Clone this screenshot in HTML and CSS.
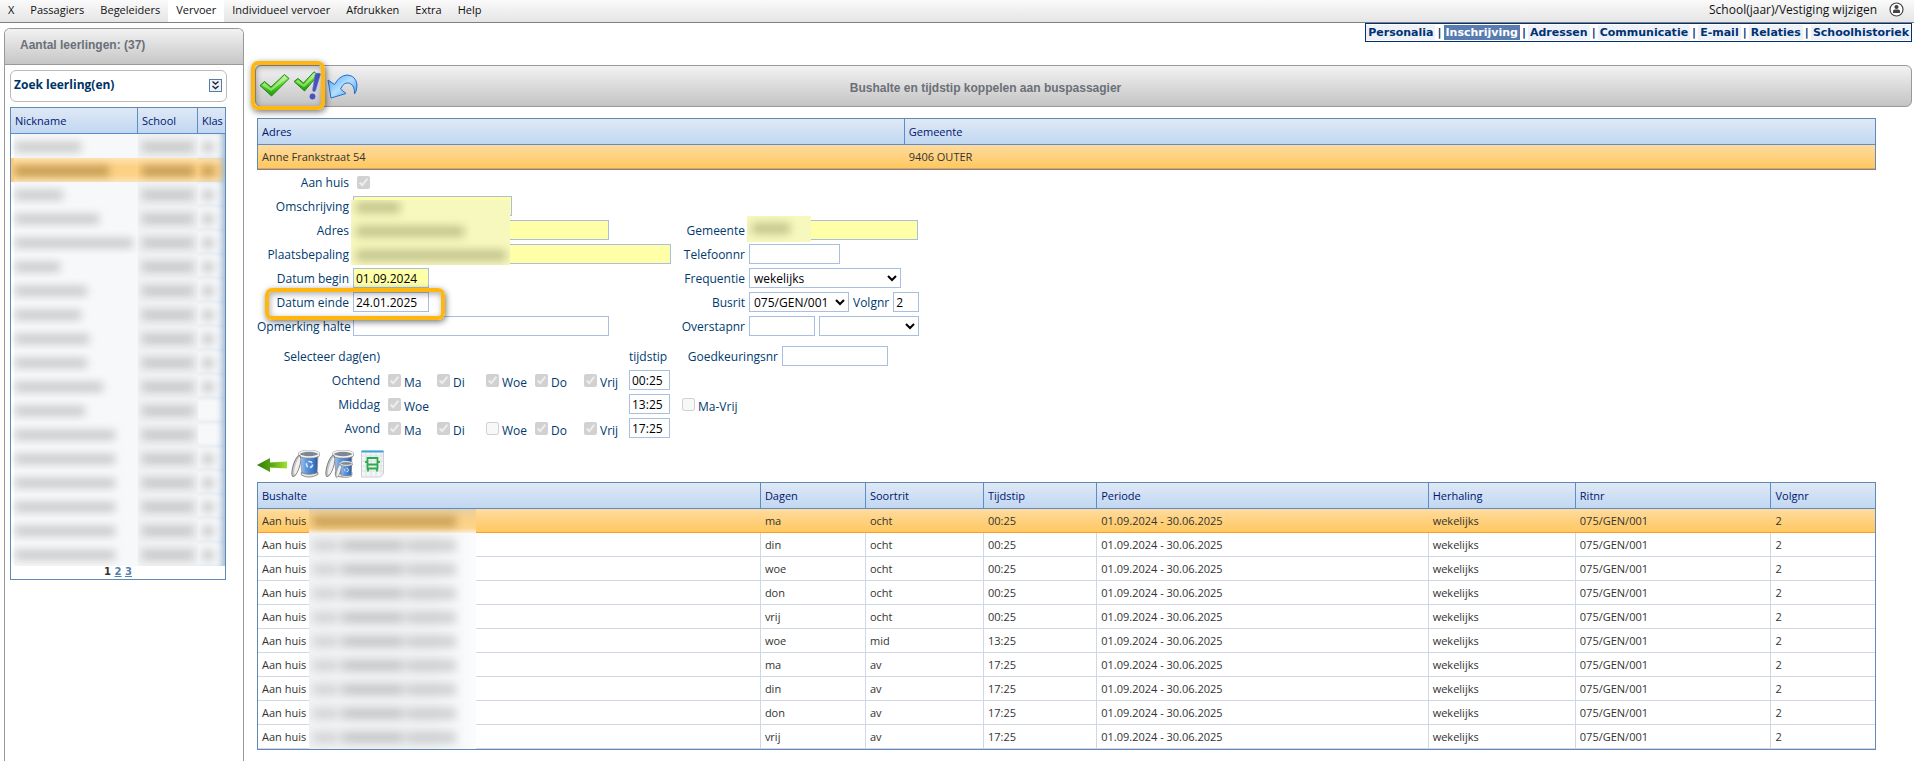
FILE: index.html
```html
<!DOCTYPE html>
<html lang="nl">
<head>
<meta charset="utf-8">
<title>Bushalte en tijdstip koppelen aan buspassagier</title>
<link rel="stylesheet" href="styles.css">
</head>
<body>
<nav class="menu">
  <a href="#">X</a><a href="#">Passagiers</a><a href="#">Begeleiders</a><a href="#" class="active">Vervoer</a><a href="#">Individueel vervoer</a><a href="#">Afdrukken</a><a href="#">Extra</a><a href="#">Help</a>
  <a href="#" class="right">School(jaar)/Vestiging wijzigen</a>
  <button class="user" aria-label="Gebruiker"><svg width="15" height="15" viewBox="0 0 15 15"><circle cx="7.500" cy="7.500" r="6.500" fill="#fff" stroke="#444" stroke-width="1.200"/><circle cx="7.500" cy="5" r="2.100" fill="#444"/><path d="M4 11V9.300Q4 7.600 5.700 7.600H9.300Q11 7.600 11 9.300V11Z" fill="#444"/></svg></button>
</nav>
<div class="layout">
  <aside class="side">
    <h2 class="side-title">Aantal leerlingen: (37)</h2>
    <div class="side-body">
      <div class="search"><span>Zoek leerling(en)</span>
        <button aria-label="Uitklappen"><svg width="13" height="13" viewBox="0 0 13 13"><rect x=".5" y=".5" width="12" height="12" fill="#eaf2fb" stroke="#5c7c9c"/><path d="M3.500 2.500 6.500 5 9.500 2.500M3.500 7 6.500 9.500 9.500 7" fill="none" stroke="#223" stroke-width="1.400"/></svg></button>
      </div>
      <div class="pupils">
        <table class="grid">
          <colgroup><col class="c-nick"><col class="c-school"><col class="c-klas"></colgroup>
          <thead><tr><th>Nickname</th><th>School</th><th>Klas</th></tr></thead>
          <tbody>
            <tr><td><i style="width:66px"></i></td><td><i></i></td><td><i></i></td></tr>
            <tr class="sel"><td><i style="width:94px"></i></td><td><i></i></td><td><i></i></td></tr>
            <tr><td><i style="width:48px"></i></td><td><i></i></td><td><i></i></td></tr>
            <tr><td><i style="width:84px"></i></td><td><i></i></td><td><i></i></td></tr>
            <tr><td><i style="width:118px"></i></td><td><i></i></td><td><i></i></td></tr>
            <tr><td><i style="width:45px"></i></td><td><i></i></td><td><i></i></td></tr>
            <tr><td><i style="width:72px"></i></td><td><i></i></td><td><i></i></td></tr>
            <tr><td><i style="width:66px"></i></td><td><i></i></td><td><i></i></td></tr>
            <tr><td><i style="width:74px"></i></td><td><i></i></td><td><i></i></td></tr>
            <tr><td><i style="width:72px"></i></td><td><i></i></td><td><i></i></td></tr>
            <tr><td><i style="width:88px"></i></td><td><i></i></td><td><i></i></td></tr>
            <tr><td><i style="width:70px"></i></td><td><i></i></td><td></td></tr>
            <tr><td><i style="width:100px"></i></td><td><i></i></td><td></td></tr>
            <tr><td><i style="width:100px"></i></td><td><i></i></td><td><i></i></td></tr>
            <tr><td><i style="width:100px"></i></td><td><i></i></td><td><i></i></td></tr>
            <tr><td><i style="width:100px"></i></td><td><i></i></td><td><i></i></td></tr>
            <tr><td><i style="width:100px"></i></td><td><i></i></td><td><i></i></td></tr>
            <tr><td><i style="width:100px"></i></td><td><i></i></td><td><i></i></td></tr>
          </tbody>
        </table>
        <div class="pager"><b>1</b> <a href="#">2</a> <a href="#">3</a></div>
      </div>
    </div>
  </aside>
  <main class="main">
    <nav class="tabs"><a href="#">Personalia</a>|<a href="#" class="on">Inschrijving</a>|<a href="#">Adressen</a>|<a href="#">Communicatie</a>|<a href="#">E-mail</a>|<a href="#">Relaties</a>|<a href="#">Schoolhistoriek</a></nav>
    <header class="toolbar">
      <svg width="0" height="0" class="defs" aria-hidden="true"><defs>
        <linearGradient id="gr" x1="0" y1="0" x2="0" y2="1"><stop offset="0" stop-color="#b5f28e"/><stop offset=".5" stop-color="#4fd024"/><stop offset="1" stop-color="#1f9a08"/></linearGradient>
        <linearGradient id="bl" x1="0" y1="0" x2="1" y2="1"><stop offset="0" stop-color="#4aa5f5"/><stop offset=".5" stop-color="#b4e0ff"/><stop offset="1" stop-color="#3b8eea"/></linearGradient>
        <linearGradient id="bin" x1="0" y1="0" x2="1" y2="0"><stop offset="0" stop-color="#a9c8ee"/><stop offset=".35" stop-color="#5f98dc"/><stop offset=".75" stop-color="#3f78c4"/><stop offset="1" stop-color="#2c55a0"/></linearGradient>
        <linearGradient id="ar" x1="0" y1="0" x2="1" y2="0"><stop offset="0" stop-color="#2f7a08"/><stop offset=".5" stop-color="#5aa814"/><stop offset="1" stop-color="#a4e034"/></linearGradient>
        <g id="can">
          <path d="M9 4.500 11 24Q18 27 26 24L27 4.500Z" fill="url(#bin)" stroke="#8a8f98" stroke-width=".8"/>
          <path d="M10.300 22.500Q18 26 27 22.500V24.500Q18 29.500 10.300 25Z" fill="#e6e6e6" stroke="#777" stroke-width=".8"/>
          <ellipse cx="18" cy="4.300" rx="9.800" ry="3" fill="#7b8796" stroke="#8a8a8a" stroke-width="2.600"/>
          <ellipse cx="18" cy="4" rx="9.800" ry="3" fill="none" stroke="#f2f2f2" stroke-width="1.600"/>
          <ellipse cx="5.300" cy="16" rx="3.200" ry="11" transform="rotate(17 5.300 16)" fill="#c4c4c4" stroke="#808080"/>
          <ellipse cx="6.200" cy="16" rx="1.900" ry="9" transform="rotate(17 6.200 16)" fill="#f0f0f0"/>
          <circle cx="18.500" cy="14.500" r="3" fill="none" stroke="#d6ecff" stroke-width="1.600" stroke-dasharray="4.200 2.083"/>
        </g>
      </defs></svg>
      <div class="tools">
        <button aria-label="Bewaren"><svg width="31" height="30" viewBox="0 0 31 30"><path d="M1 14.500 5.500 10.500 12 16 25.500 3.500 30 7.500 12.500 25Z" fill="url(#gr)" stroke="#27821a"/><path d="M3 14.300 5.600 12 12 17.500 25.500 5 28 7.400 12.300 20Z" fill="#d8ffc0" opacity=".5"/></svg></button>
        <button aria-label="Bewaren en controleren"><svg width="31" height="30" viewBox="0 0 31 30"><path d="M1 10.500 5 7.500 10.500 12 21 .8 25 4 11.500 20Z" fill="url(#gr)" stroke="#27821a"/><path d="M3 10.500 5 9 10.500 13.800 21 2.500 23 4.200 11 16Z" fill="#d8ffc0" opacity=".5"/><path d="M22 3.500Q25 1 27.500 3L22.500 20Q20.500 21.500 19.500 19.500Z" fill="#4653c0" stroke="#6d78d0" stroke-width=".6"/><circle cx="19.500" cy="25.500" r="2.900" fill="#4653c0"/></svg></button>
        <button aria-label="Ongedaan maken"><svg width="31" height="30" viewBox="0 0 31 30"><path d="M1 9 7.500 13.500Q12.500 4.500 20 4Q29 4.500 30 14Q30 20 27.500 23Q28 14.500 22.500 12.200Q17 10.500 13.500 18L19 22.500 4 27Z" fill="url(#bl)" stroke="#2470cc"/></svg></button>
        <span class="mark mark-tools"></span>
      </div>
      <h1>Bushalte en tijdstip koppelen aan buspassagier</h1>
    </header>
    <div class="content">
      <table class="grid address">
        <colgroup><col class="c-adr"><col></colgroup>
        <thead><tr><th>Adres</th><th>Gemeente</th></tr></thead>
        <tbody><tr class="sel"><td>Anne Frankstraat 54</td><td>9406 OUTER</td></tr></tbody>
      </table>
      <form>
        <div class="form">
          <div class="left">
            <div class="row"><label for="huis">Aan huis</label><input id="huis" type="checkbox" checked disabled></div>
            <div class="row"><label for="oms">Omschrijving</label><input id="oms" type="text" class="y w160"></div>
            <div class="row"><label for="adr">Adres</label><input id="adr" type="text" class="y w256"></div>
            <div class="row"><label for="pla">Plaatsbepaling</label><input id="pla" type="text" class="y w318"></div>
            <div class="row"><label for="beg">Datum begin</label><input id="beg" type="text" class="y w76" value="01.09.2024"></div>
            <div class="row"><label for="ein">Datum einde</label><input id="ein" type="text" class="w76" value="24.01.2025"><span class="mark mark-date"></span></div>
            <div class="row"><label for="opm">Opmerking halte</label><input id="opm" type="text" class="w256"></div>
            <div class="veil veil-left"><i style="width:44px"></i><i style="width:108px"></i><i style="width:150px"></i></div>
          </div>
          <div class="right-col">
            <div class="row"><label for="gem">Gemeente</label><input id="gem" type="text" class="y w169"><span class="veil veil-town"><i style="width:38px"></i></span></div>
            <div class="row"><label for="tel">Telefoonnr</label><input id="tel" type="text" class="w91"></div>
            <div class="row"><label for="fre">Frequentie</label><select id="fre" class="w152"><option>wekelijks</option></select></div>
            <div class="row"><label for="bus">Busrit</label><select id="bus" class="w100"><option>075/GEN/001</option></select><label for="vol" class="auto">Volgnr</label><input id="vol" type="text" class="w26" value="2"></div>
            <div class="row"><label for="ove">Overstapnr</label><input id="ove" type="text" class="w66"><select aria-label="Overstap" class="w100"><option></option></select></div>
          </div>
        </div>
        <div class="form days">
          <div class="left">
            <div class="row"><span class="lab">Selecteer dag(en)</span><div class="week"></div><span class="head">tijdstip</span></div>
            <div class="row"><label for="t1">Ochtend</label><div class="week"><label><input type="checkbox" checked disabled>Ma</label><label><input type="checkbox" checked disabled>Di</label><label><input type="checkbox" checked disabled>Woe</label><label><input type="checkbox" checked disabled>Do</label><label><input type="checkbox" checked disabled>Vrij</label></div><input id="t1" type="text" class="w41" value="00:25"></div>
            <div class="row"><label for="t2">Middag</label><div class="week"><label><input type="checkbox" checked disabled>Woe</label></div><input id="t2" type="text" class="w41" value="13:25"></div>
            <div class="row"><label for="t3">Avond</label><div class="week"><label><input type="checkbox" checked disabled>Ma</label><label><input type="checkbox" checked disabled>Di</label><label><input type="checkbox" disabled>Woe</label><label><input type="checkbox" checked disabled>Do</label><label><input type="checkbox" checked disabled>Vrij</label></div><input id="t3" type="text" class="w41" value="17:25"></div>
          </div>
          <div class="right-col">
            <div class="row"><label for="goe">Goedkeuringsnr</label><input id="goe" type="text" class="w106"></div>
            <div class="row"></div>
            <div class="row week all"><label><input type="checkbox" disabled>Ma-Vrij</label></div>
          </div>
        </div>
        <div class="actions">
          <button type="button" aria-label="Terug"><svg width="30" height="28" viewBox="0 0 30 28"><path d="M0 15 13 8V12.500L30 11.500V18.500L13 17.500V22Z" fill="url(#ar)"/></svg></button>
          <button type="button" aria-label="Verwijderen"><svg width="30" height="28" viewBox="0 0 30 28"><use href="#can"/></svg></button>
          <button type="button" aria-label="Alles verwijderen"><svg width="30" height="28" viewBox="0 0 30 28"><use href="#can"/><use href="#can" transform="translate(10 11) scale(.62)"/></svg></button>
          <button type="button" aria-label="Busplanning"><svg width="26" height="28" viewBox="0 0 26 28"><path d="M2.500 1H24.500V24L21 27H2.500Z" fill="#f3f5f6" stroke="#ccd0d3"/><path d="M7 3V27M12 3V27M17 3V27M22 3V25M3 6H24M3 11H24M3 16H24M3 21H24" stroke="#dde1e4"/><path d="M2.500 1.500H24.500" stroke="#3ba4dc" stroke-width="2"/><path d="M8.500 8H18.500V18.500H8.500ZM8.500 14.500H18.500M7 11V13M20 11V13M9 19V21.500M18 19V21.500" fill="none" stroke="#2bac4a" stroke-width="1.800"/></svg></button>
        </div>
      </form>
      <table class="grid stops">
        <colgroup><col class="c1"><col class="c2"><col class="c3"><col class="c4"><col class="c5"><col class="c6"><col class="c7"><col></colgroup>
        <thead><tr><th>Bushalte</th><th>Dagen</th><th>Soortrit</th><th>Tijdstip</th><th>Periode</th><th>Herhaling</th><th>Ritnr</th><th>Volgnr</th></tr></thead>
        <tbody>
          <tr class="sel"><td>Aan huis<span class="hide"><i></i></span></td><td>ma</td><td>ocht</td><td>00:25</td><td>01.09.2024 - 30.06.2025</td><td>wekelijks</td><td>075/GEN/001</td><td>2</td></tr>
          <tr><td>Aan huis<span class="hide"><i></i></span></td><td>din</td><td>ocht</td><td>00:25</td><td>01.09.2024 - 30.06.2025</td><td>wekelijks</td><td>075/GEN/001</td><td>2</td></tr>
          <tr><td>Aan huis<span class="hide"><i></i></span></td><td>woe</td><td>ocht</td><td>00:25</td><td>01.09.2024 - 30.06.2025</td><td>wekelijks</td><td>075/GEN/001</td><td>2</td></tr>
          <tr><td>Aan huis<span class="hide"><i></i></span></td><td>don</td><td>ocht</td><td>00:25</td><td>01.09.2024 - 30.06.2025</td><td>wekelijks</td><td>075/GEN/001</td><td>2</td></tr>
          <tr><td>Aan huis<span class="hide"><i></i></span></td><td>vrij</td><td>ocht</td><td>00:25</td><td>01.09.2024 - 30.06.2025</td><td>wekelijks</td><td>075/GEN/001</td><td>2</td></tr>
          <tr><td>Aan huis<span class="hide"><i></i></span></td><td>woe</td><td>mid</td><td>13:25</td><td>01.09.2024 - 30.06.2025</td><td>wekelijks</td><td>075/GEN/001</td><td>2</td></tr>
          <tr><td>Aan huis<span class="hide"><i></i></span></td><td>ma</td><td>av</td><td>17:25</td><td>01.09.2024 - 30.06.2025</td><td>wekelijks</td><td>075/GEN/001</td><td>2</td></tr>
          <tr><td>Aan huis<span class="hide"><i></i></span></td><td>din</td><td>av</td><td>17:25</td><td>01.09.2024 - 30.06.2025</td><td>wekelijks</td><td>075/GEN/001</td><td>2</td></tr>
          <tr><td>Aan huis<span class="hide"><i></i></span></td><td>don</td><td>av</td><td>17:25</td><td>01.09.2024 - 30.06.2025</td><td>wekelijks</td><td>075/GEN/001</td><td>2</td></tr>
          <tr><td>Aan huis<span class="hide"><i></i></span></td><td>vrij</td><td>av</td><td>17:25</td><td>01.09.2024 - 30.06.2025</td><td>wekelijks</td><td>075/GEN/001</td><td>2</td></tr>
        </tbody>
      </table>
    </div>
  </main>
</div>
</body>
</html>
```

FILE: styles.css
```css
* { box-sizing: border-box; }
body {
  margin: 0; min-height: 100vh; display: flex; flex-direction: column;
  font: 12px/20px "Open Sans", "Noto Sans", sans-serif; color: #333; background: #fff;
}
a { color: inherit; text-decoration: none; }
button { border: 0; background: none; padding: 0; display: block; cursor: pointer; }
svg { display: block; }

/* menu bar */
.menu { display: flex; align-items: center; height: 23px; border-bottom: 1px solid #808080; background: linear-gradient(#fafafa, #e5e5e5); color: #111; font-size: 11px; }
.menu a { padding: 0 8px; height: 22px; }
.menu .active { background: #fff; }
.menu .right { margin-left: auto; font-size: 12px; }
.user { margin: 0 10px 4px 4px; }

.layout { flex: 1; display: flex; gap: 11px; }

/* pupil list */
.side { flex: none; width: 240px; margin: 5px 0 0 4px; border: 1px solid #999; border-bottom: 0; border-radius: 6px 6px 0 0; }
.side-title { margin: 0; height: 36px; padding-left: 15px; border-bottom: 1px solid #999; border-radius: 5px 5px 0 0; background: linear-gradient(#f2f2f2, #c6c6c6); color: #6b7078; font: bold 12px/33px "Liberation Sans", sans-serif; }
.side-body { padding: 5px 16px 0 5px; }
.search { display: flex; justify-content: space-between; align-items: center; height: 32px; padding: 0 4px 2px 3px; border: 1px solid #bbb; border-radius: 6px; color: #036; font-weight: bold; }
.pupils { width: 216px; margin-top: 5px; border: 1px solid #6189b5; }

/* data grids */
.grid { width: 100%; border-collapse: separate; border-spacing: 0; table-layout: fixed; font-size: 11px; }
.grid th, .grid td { padding: 1px 4px 0; text-align: left; white-space: nowrap; overflow: hidden; }
.grid th { height: 26px; border-right: 1px solid #5d8cc9; border-bottom: 1px solid #5d8cc9; background: linear-gradient(#dfe9f5, #c1d7f2); color: #00156e; font-weight: normal; }
.grid th:last-child, .grid td:last-child { border-right: 0; }
.grid td { height: 24px; border-right: 1px solid #d0d7e5; border-bottom: 1px solid #d0d7e5; }
.grid .sel td { border-right: 0; border-bottom: 1px solid #ff9a2e; background: linear-gradient(#ffdb9e, #ffc860); }
.address, .stops { border: 1px solid #6189b5; }
.c-nick { width: 127px; } .c-school { width: 60px; }
.c-adr { width: 40%; }
.c1 { width: 31.100%; } .c2 { width: 6.500%; } .c3 { width: 7.300%; } .c4 { width: 7%; } .c5 { width: 20.500%; } .c6 { width: 9.100%; } .c7 { width: 12.100%; }

.pupils td, .pupils .sel td { border: 0; background: #f7f8f9; }
.pupils td:nth-child(2) { background: #f1f2f3; }
.pupils .sel td { background: linear-gradient(#ffe3b4, #fdd184 35%, #fdd184 70%, #fbe3b8); }
.pupils td:first-child { box-shadow: inset 3px 0 #fff; }
.pupils .sel td:first-child { box-shadow: inset 3px 0 #ffd080; }
.pupils td:last-child { box-shadow: inset -6px 0 6px -3px #9db9d5; }
.pupils td i { display: block; width: 52px; height: 10px; background: #8886; filter: blur(4px); }
.pupils td:last-child i { width: 12px; }
.pupils .sel i { background: #9a743499; }
.pager { height: 13px; text-align: center; font: bold 10px/12px "DejaVu Sans", sans-serif; }
.pager a { color: #5580ab; text-decoration: underline; }

/* main area */
.main { flex: 1; min-width: 0; display: flex; flex-direction: column; padding: 0 2px 11px 0; }
.tabs { align-self: flex-end; height: 19px; padding: 1px 0 0; border: 1px solid #003273; background: #fff; color: #003273; font: bold 11px/15px "DejaVu Sans", sans-serif; }
.tabs a { display: inline-block; padding: 0 2px; margin: 0 2px; background: #eef1f8; }
.tabs a:first-child { margin-left: 0; }
.tabs a:last-child { margin-right: 0; }
.tabs .on { background: #587cb0; color: #fff; }
.toolbar { display: flex; align-items: center; height: 42px; margin-top: 23px; border: 1px solid #999; border-radius: 6px; background: linear-gradient(#f2f2f2, #c4c4c4); }
.defs { position: absolute; }
.tools { position: relative; display: flex; gap: 3px; padding-left: 3px; }
.toolbar h1 { flex: 1; margin: 0; padding: 4px 18% 0 0; text-align: center; color: #6b7078; font: bold 12px/16px "Liberation Sans", sans-serif; }
.mark { position: absolute; z-index: 1; border: 4px solid #ffb70f; border-radius: 7px; box-shadow: 1px 2px 6px #0008, inset 1px 2px 6px #0005; pointer-events: none; }
.mark-tools { left: -5px; top: -10px; width: 74px; height: 49px; }
.mark-date { left: 8px; top: -4px; width: 180px; height: 32px; }
.content { margin: 11px 36px 0 2px; }

/* form */
.form { display: flex; gap: 4px; padding-top: 2px; color: #003a70; }
.left { position: relative; width: 414px; }
.row { position: relative; display: flex; gap: 4px; height: 20px; margin-bottom: 4px; white-space: nowrap; }
.row > label, .lab { width: 92px; text-align: right; flex: none; }
.row > label, .lab, .head { line-height: 22px; }
.right-col { padding-top: 48px; }
.right-col .row > label { width: 70px; }
.row > .auto, .right-col .row > .auto { width: auto; }
input[type="text"], select { height: 20px; margin: 0; padding: 0 2px; border: 1px solid #a9bfdf; border-radius: 0; background: #fff; color: #000; font: inherit; line-height: 18px; }
select { padding: 0; }
input[type="checkbox"] { margin: 4px; width: 13px; height: 13px; flex: none; }
input.y { background: #ffffa8; }
.w26 { width: 26px; } .w41 { width: 41px; } .w66 { width: 66px; } .w76 { width: 76px; } .w91 { width: 91px; } .w100 { width: 100px; }
.w106 { width: 106px; } .w152 { width: 152px; } .w160 { width: 159px; } .w169 { width: 169px; } .w256 { width: 256px; } .w318 { width: 318px; }
.days { padding-top: 6px; }
.days .row > label, .lab { width: 123px; }
.days .left .row > .week + * { margin-left: -4px; }
.days .right-col { padding-top: 0; }
.days .right-col .row > label { width: 103px; }
.week { display: flex; width: 245px; padding-left: 4px; }
.week label, .days .week > label { display: flex; flex: none; width: 49px; line-height: 26px; }
.week input[type="checkbox"] { margin: 4px 3px 0 0; }
.days .right-col .all { padding-left: 7px; }
.days .right-col .all > label { width: auto; }

/* unreadable personal data */
.veil { position: absolute; overflow: hidden; background: #f7f8bd; }
.veil i { display: block; height: 11px; margin: 7px 0 0 5px; background: #8a8a5a77; filter: blur(4px); }
.veil-left { left: 94px; top: 28px; width: 159px; height: 65px; }
.veil-left i { margin: 2px 0 13px 5px; }
.veil-left i + i { margin-top: 0; }
.veil-town { left: 72px; top: -4px; width: 64px; height: 26px; }
.stops td:first-child { position: relative; overflow: visible; }
.hide { position: absolute; left: 51px; top: 0; bottom: -1px; width: 167px; overflow: hidden; background: linear-gradient(90deg, #f1f2f3 75%, #fbfcfd); }
.hide i { display: block; width: 143px; height: 11px; margin: 7px 0 0 4px; background: linear-gradient(90deg, #8884 14%, #8882 18%, #8886 24%, #8886 60%, #8883 64%, #8885 70%); filter: blur(4px); }
.sel .hide { background: linear-gradient(#e3d0a8, #fad087 40%, #fdd48c 80%, #fbeedb); }
.sel .hide i { background: #a6803899; }

.actions { display: flex; gap: 4px; padding: 8px 0 4px; }
```
